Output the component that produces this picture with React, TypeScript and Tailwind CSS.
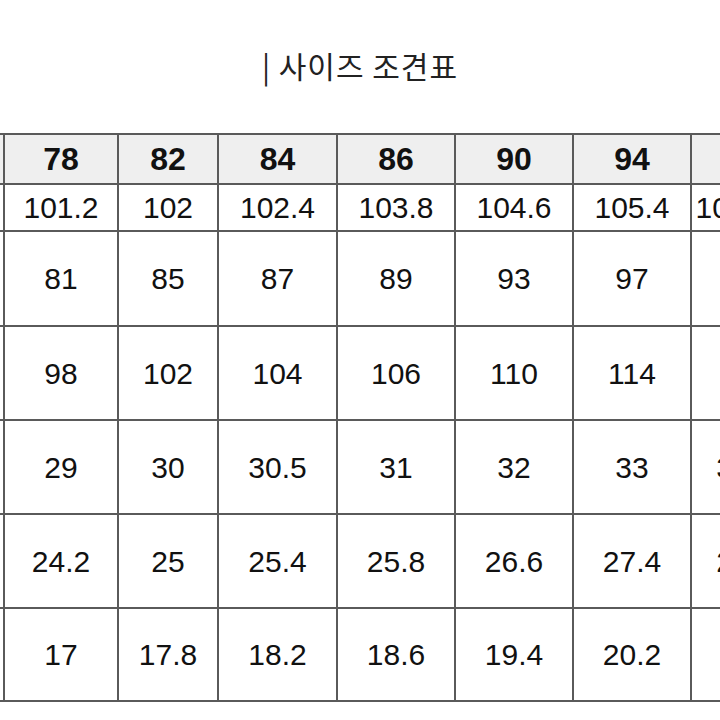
import React from 'react';

const sizes = ['74', '78', '82', '84', '86', '90', '94', ''];

const rows: { h: string; vals: string[] }[] = [
  { h: 'h-[47px]', vals: ['99.6', '101.2', '102', '102.4', '103.8', '104.6', '105.4', '106.2'] },
  { h: 'h-[95px]', vals: ['77', '81', '85', '87', '89', '93', '97', ''] },
  { h: 'h-[94px]', vals: ['94', '98', '102', '104', '106', '110', '114', ''] },
  { h: 'h-[94px]', vals: ['28', '29', '30', '30.5', '31', '32', '33', '34'] },
  { h: 'h-[94px]', vals: ['23.4', '24.2', '25', '25.4', '25.8', '26.6', '27.4', '28'] },
  { h: 'h-[93px]', vals: ['16.2', '17', '17.8', '18.2', '18.6', '19.4', '20.2', ''] },
];

const colWidths = ['w-[100px]', 'w-[114px]', 'w-[100px]', 'w-[119px]', 'w-[118px]', 'w-[118px]', 'w-[118px]', 'w-[84px]'];

export default function App() {
  return (
    <div className="w-[720px] h-[720px] bg-white overflow-hidden">
      {/* 제목 */}
      <div className="h-[130px] flex items-center justify-center">
        <h1 className="text-[30px] leading-none font-normal tracking-[1px] text-[#222] font-['Noto_Sans_CJK_KR','Noto_Sans',sans-serif]">
          | 사이즈 조견표
        </h1>
      </div>

      {/* 조견표 */}
      <div className="mt-[3px] overflow-hidden">
        <table className="table-fixed border-collapse w-[871px] min-w-[871px] ml-[-97px] font-['Liberation_Sans',Arial,sans-serif] text-[#111]">
          <colgroup>
            {colWidths.map((w, i) => (
              <col key={i} className={w} />
            ))}
          </colgroup>
          <thead>
            <tr className="h-[48px] bg-[#efefef]">
              {sizes.map((s, i) => (
                <th key={i} className="border-2 border-[#5a5a5a] text-[32px] font-bold text-center align-middle p-0">
                  {s}
                </th>
              ))}
            </tr>
          </thead>
          <tbody>
            {rows.map((r, ri) => (
              <tr key={ri} className={r.h}>
                {r.vals.map((v, vi) => (
                  <td key={vi} className="border-2 border-[#5a5a5a] text-[30px] text-center align-middle p-0 whitespace-nowrap">
                    {v}
                  </td>
                ))}
              </tr>
            ))}
          </tbody>
        </table>
      </div>
    </div>
  );
}
